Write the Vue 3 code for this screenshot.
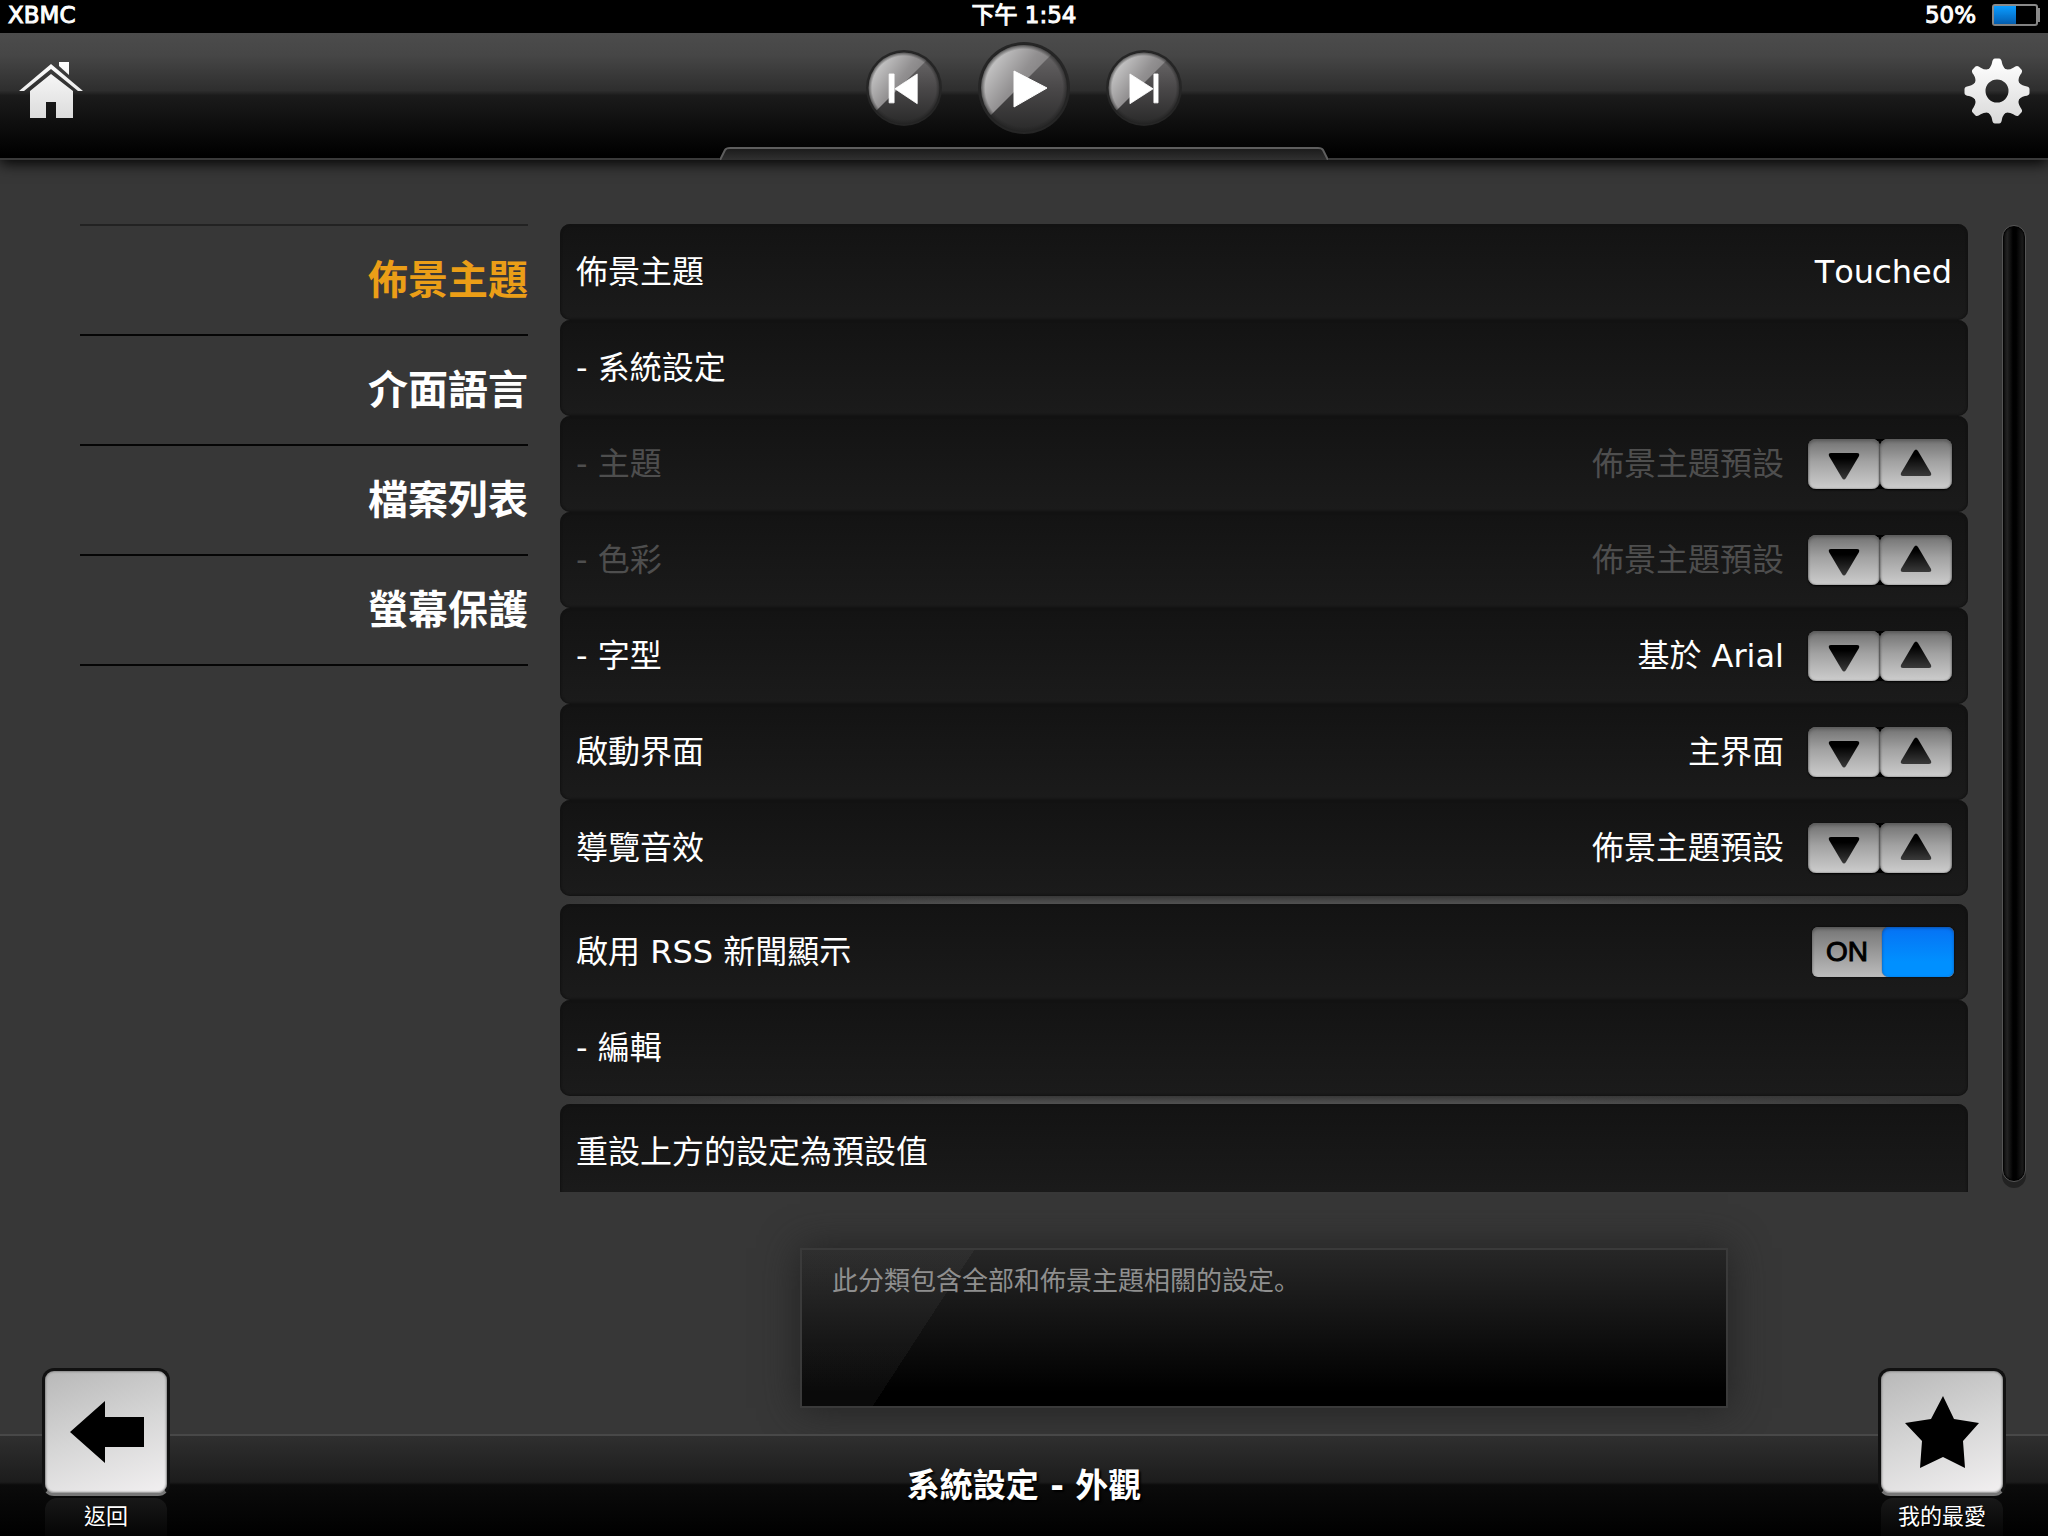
<template>
  <div class="app">
    <!-- status bar -->
    <div class="status">
      <span>XBMC</span>
      <time class="clock">下午 1:54</time>
      <span class="power">
        50%
        <span class="battery"><span class="charge"></span></span>
      </span>
    </div>

    <!-- player header -->
    <header class="header">
      <button class="plain" aria-label="主選單">
        <svg width="72" height="72" viewBox="0 0 72 72">
          <defs>
            <linearGradient id="silver" x1="0" y1="0" x2="0" y2="72" gradientUnits="userSpaceOnUse">
              <stop offset="0.1" stop-color="#ffffff" />
              <stop offset="1" stop-color="#d8d8d8" />
            </linearGradient>
          </defs>
          <g fill="url(#silver)">
            <path d="M43 10h10v13l-10-9z" />
            <path d="M35 12L67 39h-5L35 17 8 39H3z" />
            <path d="M35 22L57 39v27H40V50H30v16H14V39z" />
          </g>
        </svg>
      </button>

      <div class="player">
        <button v-for="b in playerButtons" :key="b.label" class="plain" :aria-label="b.label" @click="b.action">
          <svg :class="b.size" viewBox="0 0 92 92">
            <defs>
              <linearGradient id="disc" x1="0" y1="0" x2="0" y2="1">
                <stop offset="0" stop-color="#6e6c6d" />
                <stop offset="0.5" stop-color="#4a4849" />
                <stop offset="1" stop-color="#2a2a2a" />
              </linearGradient>
              <linearGradient id="gloss" x1="0" y1="0.2" x2="0.75" y2="0.75">
                <stop offset="0" stop-color="#d2d2d2" />
                <stop offset="0.5" stop-color="#929091" />
                <stop offset="1" stop-color="#6e6c6d" />
              </linearGradient>
              <radialGradient id="rim">
                <stop offset="0.88" stop-color="#222" stop-opacity="0" />
                <stop offset="1" stop-color="#222" stop-opacity="0.8" />
              </radialGradient>
              <clipPath id="gloss-clip"><path d="M0 0H86L0 86z" /></clipPath>
            </defs>
            <circle cx="46" cy="46" r="46" fill="#262626" />
            <circle cx="46" cy="46" r="43" fill="url(#disc)" />
            <circle cx="46" cy="46" r="43" fill="url(#gloss)" clip-path="url(#gloss-clip)" />
            <circle cx="46" cy="46" r="44" fill="url(#rim)" />
            <path :d="b.icon" fill="#fff" stroke="#fff" stroke-linejoin="round" />
          </svg>
        </button>
      </div>

      <button class="plain end" aria-label="設定">
        <svg width="72" height="72" viewBox="0 0 72 72">
          <mask id="gear">
            <g transform="translate(37 39)" fill="#fff">
              <circle r="17.5" fill="none" stroke="#fff" stroke-width="12" />
              <path
                v-for="n in 8"
                :key="n"
                :transform="`rotate(${n * 45})`"
                d="M-11-20Q-6-23-5-28Q-4.500-32.500-2-32.500H2Q4.500-32.500 5-28Q6-23 11-20z"
              />
            </g>
          </mask>
          <rect width="72" height="72" fill="url(#silver)" mask="url(#gear)" />
        </svg>
      </button>

      <svg class="tab" viewBox="0 0 608 13">
        <defs>
          <linearGradient id="tab-fill" x1="0" y1="0" x2="0" y2="1">
            <stop offset="0" stop-color="#1a1a1a" />
            <stop offset="1" stop-color="#303030" />
          </linearGradient>
        </defs>
        <path d="M0 13L5 3Q6 1 10 1H598Q602 1 603 3L608 13" fill="url(#tab-fill)" stroke="#5e5e5e" stroke-width="2" />
      </svg>
    </header>

    <main class="content">
      <!-- categories -->
      <nav class="categories">
        <button
          v-for="c in categories"
          :key="c"
          :class="['category', { active: c === current }]"
          @click="current = c"
        >
          {{ c }}
        </button>
      </nav>

      <!-- settings -->
      <div class="settings">
        <section v-for="(group, g) in groups" :key="g" class="group">
          <div v-for="row in group" :key="row.id" :class="['row', { disabled: row.disabled }]">
            <template v-if="row.type === 'spin'">
              <span class="name">{{ row.name }}</span>
              <output class="value">{{ row.value }}</output>
              <span class="spinner">
                <button class="spin" :disabled="row.disabled" :aria-label="`${row.name} 下一個`">
                  <svg width="72" height="50" viewBox="0 1 72 50">
                    <defs>
                      <linearGradient id="arrow" x1="0" y1="0" x2="0" y2="1">
                        <stop offset="0.2" stop-color="#000" />
                        <stop offset="1" stop-color="#3a3a3a" />
                      </linearGradient>
                    </defs>
                    <path d="M23 15H49Q52 15 51 18L38 40Q36 43 34 40L21 18Q20 15 23 15z" fill="url(#arrow)" />
                  </svg>
                </button>
                <button class="spin" :disabled="row.disabled" :aria-label="`${row.name} 上一個`">
                  <svg width="72" height="50" viewBox="0 1 72 50">
                    <path d="M23 38H49Q52 38 51 35L38 13Q36 10 34 13L21 35Q20 38 23 38z" fill="url(#arrow)" />
                  </svg>
                </button>
              </span>
            </template>
            <template v-else-if="row.type === 'toggle'">
              <label class="name" :for="row.id">{{ row.name }}</label>
              <label :class="['toggle', { off: !rss }]">
                <input :id="row.id" v-model="rss" type="checkbox" />
                <span class="state">{{ rss ? 'ON' : 'OFF' }}</span>
                <span class="knob"></span>
              </label>
            </template>
            <button v-else class="action">
              <span class="name">{{ row.name }}</span>
              <span class="value">{{ row.value }}</span>
            </button>
          </div>
        </section>
      </div>

      <div class="scrollbar"><div class="thumb"></div></div>

      <p class="help">此分類包含全部和佈景主題相關的設定。</p>
    </main>

    <footer class="footer">
      <button class="dock">
        <span class="tile">
          <svg width="128" height="128" viewBox="0 0 128 128">
            <path d="M28 64L63 33V49H102V79H63V95z" />
          </svg>
        </span>
        <span class="caption">返回</span>
      </button>
      <h1 class="title">系統設定 - 外觀</h1>
      <button class="dock">
        <span class="tile">
          <svg width="128" height="128" viewBox="0 0 128 128">
            <path d="M65 28L76 51 101 55 85 73 87 100 65 89 42 100 44 73 27 55 53 51z" />
          </svg>
        </span>
        <span class="caption">我的最愛</span>
      </button>
    </footer>
  </div>
</template>

<script setup>
import { ref } from 'vue'

const categories = ['佈景主題', '介面語言', '檔案列表', '螢幕保護']
const current = ref('佈景主題')
const rss = ref(true)
const playing = ref(false)

const playerButtons = [
  { label: '上一首', size: 'small', icon: 'M28 29h6v35h-6zM62 29v36L35 47z', action: () => {} },
  { label: '播放', size: 'large', icon: 'M36 29L69 46 36 65z', action: () => { playing.value = !playing.value } },
  { label: '下一首', size: 'small', icon: 'M58 29h5v35h-5zM29 29v36L57 47z', action: () => {} }
]

const groups = [
  [
    { id: 'skin', name: '佈景主題', value: 'Touched' },
    { id: 'skin-settings', name: '- 系統設定' },
    { id: 'theme', type: 'spin', name: '- 主題', value: '佈景主題預設', disabled: true },
    { id: 'colors', type: 'spin', name: '- 色彩', value: '佈景主題預設', disabled: true },
    { id: 'font', type: 'spin', name: '- 字型', value: '基於 Arial' },
    { id: 'startup', type: 'spin', name: '啟動界面', value: '主界面' },
    { id: 'sounds', type: 'spin', name: '導覽音效', value: '佈景主題預設' }
  ],
  [
    { id: 'rss', type: 'toggle', name: '啟用 RSS 新聞顯示' },
    { id: 'rss-edit', name: '- 編輯' }
  ],
  [{ id: 'reset', name: '重設上方的設定為預設值' }]
]
</script>

<style>
body {
  background: #373737;
}
</style>

<style scoped>
.app {
  height: 100vh;
  display: flex;
  flex-direction: column;
  background: #373737;
  color: #fff;
  font-family: 'DejaVu Sans', 'Noto Sans CJK TC', sans-serif;
  font-size: 32px;
  line-height: 40px;
  font-kerning: none;
}

button {
  padding: 0;
  border: 0;
  background: none;
  color: inherit;
  font: inherit;
  font-kerning: none;
  cursor: pointer;
}

svg {
  display: block;
}

/* status bar */
.status {
  box-sizing: border-box;
  display: grid;
  grid-template-columns: 1fr auto 1fr;
  align-items: center;
  height: 33px;
  padding: 0 8px 3px;
  background: #000;
  font-size: 23px;
  line-height: 30px;
  -webkit-text-stroke: 1px #fff;
}

.power {
  display: flex;
  align-items: center;
  justify-content: flex-end;
  gap: 16px;
}

.battery {
  position: relative;
  box-sizing: border-box;
  width: 46px;
  height: 22px;
  margin-right: 2px;
  border: 2px solid #8a8a8a;
  border-radius: 3px;
}

.battery::after {
  content: '';
  position: absolute;
  top: 2px;
  right: -4px;
  width: 2px;
  height: 14px;
  background: #8a8a8a;
}

.charge {
  display: block;
  width: 53%;
  height: 100%;
  background: linear-gradient(#0a9cff, #0560b4);
}

/* header */
.header {
  position: relative;
  z-index: 1;
  box-sizing: border-box;
  flex: none;
  display: grid;
  grid-template-columns: 1fr auto 1fr;
  align-items: center;
  height: 127px;
  padding: 0 16px 15px;
  border-bottom: 2px solid #3a3a3a;
  background: linear-gradient(#4c4c4c, #464646 18%, #2e2e2e 46%, #1b1b1b 50%, #000 98%);
  box-shadow: 0 3px 14px #000;
}

.plain {
  justify-self: start;
}

.end {
  justify-self: end;
}

.player {
  display: flex;
  align-items: center;
  gap: 36px;
}

.small {
  width: 76px;
  height: 76px;
}

.large {
  width: 92px;
  height: 92px;
}

.tab {
  position: absolute;
  left: 50%;
  bottom: -2px;
  width: 608px;
  height: 13px;
  margin-left: -304px;
}

/* body */
.content {
  flex: 1;
  min-height: 0;
  display: grid;
  grid-template-columns: 448px 1fr 24px;
  grid-template-rows: minmax(0, 1fr) auto;
  column-gap: 32px;
  padding: 64px 24px 26px 80px;
}

.categories {
  display: flex;
  flex-direction: column;
  border-top: 2px solid #222;
  align-self: start;
}

.category {
  box-sizing: border-box;
  height: 110px;
  border-bottom: 2px solid #050505;
  font-size: 40px;
  line-height: 48px;
  font-weight: bold;
  text-align: right;
}

.category.active {
  color: #eb9e17;
}

.settings {
  overflow-y: auto;
  scrollbar-width: none;
}

.group + .group::before {
  content: '';
  display: block;
  height: 8px;
  background: linear-gradient(90deg, #373737, transparent 30%, transparent 70%, #373737),
    linear-gradient(#373737, #484848 60%, #505050);
}

.row {
  box-sizing: border-box;
  display: flex;
  align-items: center;
  height: 96px;
  padding: 0 16px;
  border-radius: 10px;
  background: linear-gradient(#131313, #1b1b1b);
  box-shadow: inset 0 0 2px 1px #121212;
}

.name {
  flex: 1;
  text-align: left;
}

.disabled {
  color: #4e4e4e;
}

.action {
  flex: 1;
  display: flex;
  height: 100%;
  align-items: center;
}

.spinner {
  display: flex;
  margin-left: 24px;
  background: #000;
  border-radius: 8px;
}

.spin {
  width: 72px;
  height: 50px;
  border-radius: 8px;
  background: linear-gradient(#707070, #a2a2a2 45%, #cdcdcd);
  box-shadow: inset 0 2px 3px #5c5c5c, inset 0 0 2px #666, 0 1px 2px #000;
}

.toggle {
  position: relative;
  display: flex;
  width: 142px;
  height: 50px;
  margin-right: -2px;
  border-radius: 6px;
  background: linear-gradient(#757575, #bcbcbc);
  box-shadow: inset 0 2px 3px #555, 0 0 2px #000;
  color: #000;
  font-family: 'Liberation Sans', sans-serif;
  font-size: 28px;
  line-height: 50px;
  cursor: pointer;
}

.toggle input {
  position: absolute;
  inset: 0;
  margin: 0;
  opacity: 0;
}

.state {
  flex: 1;
  text-align: center;
  -webkit-text-stroke: 1px #000;
}

.knob {
  width: 72px;
  border-radius: 7px;
  background: linear-gradient(#0672f4, #0090ff 70%);
  box-shadow: inset 0 1px 3px #0a4fa8, 0 0 1px #024;
}

.toggle.off {
  flex-direction: row-reverse;
}

.toggle.off .knob {
  background: linear-gradient(#555, #888);
}

.scrollbar {
  box-sizing: border-box;
  margin: 1px 0 4px 2px;
  width: 24px;
  padding-bottom: 6px;
  border-radius: 12px;
  background: linear-gradient(transparent 97%, #222 98%);
}

.thumb {
  box-sizing: border-box;
  height: 100%;
  border: 1px solid #555;
  border-radius: 12px;
  background: linear-gradient(90deg, #111, #222 20%, #000 45%, #000 60%, #1c1c1c 90%, #111);
  box-shadow: inset 0 0 2px 1px #000;
}

.help {
  grid-column: 2;
  justify-self: center;
  box-sizing: border-box;
  width: 928px;
  max-width: 100%;
  height: 160px;
  margin: 56px 0 0;
  padding: 12px 30px;
  border: 2px solid #3a3a3a;
  background: linear-gradient(123deg, rgba(255, 255, 255, 0.04) 17%, transparent 17%),
    linear-gradient(#272727, #000 90%);
  background-origin: border-box;
  box-shadow: 0 0 36px #222;
  color: #8f8f8f;
  font-family: 'DejaVu Sans', 'Noto Sans CJK SC', sans-serif;
  font-size: 26px;
  line-height: 38px;
}

/* footer */
.footer {
  box-sizing: border-box;
  flex: none;
  display: flex;
  align-items: flex-end;
  justify-content: space-between;
  height: 102px;
  padding: 0 42px;
  border-top: 2px solid #484848;
  background: linear-gradient(#2f2f2f, #1c1c1c 46%, #0b0b0b 49%, #000);
}

.title {
  margin: 0;
  align-self: center;
  font-size: 33px;
  line-height: 48px;
  text-shadow: 2px 2px 2px #000;
}

.dock {
  display: flex;
  flex-direction: column;
  align-items: center;
  gap: 2px;
  width: 128px;
}

.tile {
  box-sizing: border-box;
  width: 128px;
  height: 128px;
  border: 3px solid #111;
  border-bottom-color: #777;
  border-radius: 12px;
  background: linear-gradient(160deg, #b8b8b8, #d6d6d6 50%, #f2f0f1);
  box-shadow: inset 0 0 2px 1px #888;
}

.tile svg {
  margin: -3px;
}

.caption {
  width: 122px;
  height: 38px;
  border-radius: 12px 12px 0 0;
  background: linear-gradient(#181818, #050505);
  font-size: 22px;
  line-height: 38px;
  text-shadow: 1px 1px 2px #000;
}
</style>
